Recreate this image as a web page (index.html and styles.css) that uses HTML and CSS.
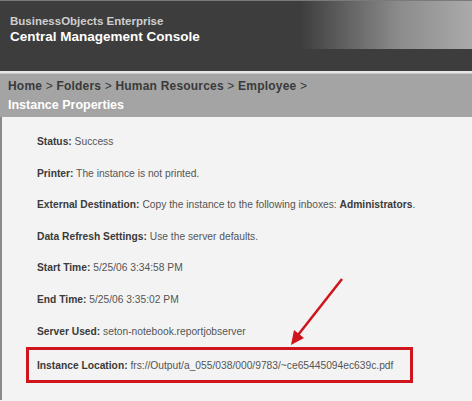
FILE: index.html
```html
<!DOCTYPE html>
<html lang="en">
<head>
  <meta charset="UTF-8" />
  <title>Central Management Console - Instance Properties</title>
  <link rel="stylesheet" href="styles.css">
</head>
<body>
  <div class="header">
    <div class="header-top">
      <div class="product">BusinessObjects Enterprise</div>
      <div class="console">Central Management Console</div>
    </div>
  </div>

  <div class="crumbs">
    <div class="path"><b>Home</b> &gt; <b>Folders</b> &gt; <b>Human Resources</b> &gt; <b>Employee</b> &gt;</div>
    <div class="title">Instance Properties</div>
  </div>

  <div class="content">
    <div class="prop"><b>Status:</b> Success</div>
    <div class="prop"><b>Printer:</b> The instance is not printed.</div>
    <div class="prop"><b>External Destination:</b> Copy the instance to the following inboxes: <b>Administrators</b>.</div>
    <div class="prop"><b>Data Refresh Settings:</b> Use the server defaults.</div>
    <div class="prop"><b>Start Time:</b> 5/25/06 3:34:58 PM</div>
    <div class="prop"><b>End Time:</b> 5/25/06 3:35:02 PM</div>
    <div class="prop"><b>Server Used:</b> seton-notebook.reportjobserver</div>
    <div class="prop highlight"><b>Instance Location:</b> frs://Output/a_055/038/000/9783/~ce65445094ec639c.pdf</div>

    <!-- callout arrow pointing at the highlighted row -->
    <svg class="arrow" width="70" height="80" viewBox="0 0 70 80">
      <line x1="60" y1="4" x2="16" y2="60" stroke="#d0141b" stroke-width="2.5" />
      <polygon points="9,70 12,55 22,63" fill="#d0141b" />
    </svg>
  </div>
</body>
</html>
```

FILE: styles.css
```css
body {
  margin: 0;
  font-family: "Liberation Sans", Arial, sans-serif;
  background: #f3f3f3;
}
.header {
  background: #3d3d3d;
  border-top: 1px solid #7a7a7a;
  height: 70px;
  border-bottom: 2px solid #e6e6e6;
}
.header-top {
  height: 48px;
  padding: 14px 0 0 10px;
  box-sizing: border-box;
  background: linear-gradient(to right, #3d3d3d 0, #3d3d3d 300px, #8c8c8c 400px, #aaaaaa 472px);
}
.product {
  color: #cfcfcf;
  font-weight: bold;
  font-size: 11.5px;
}
.console {
  color: #fff;
  font-weight: bold;
  font-size: 13.5px;
  margin-top: 2px;
}
.crumbs {
  background: #a4a4a4;
  border-top: 1px solid #c8c8c8;
  height: 44px;
  padding: 5px 0 0 8px;
  box-sizing: border-box;
}
.path {
  color: #3a3a3a;
  font-size: 12px;
  letter-spacing: 0.2px;
}
.title {
  color: #fff;
  font-weight: bold;
  font-size: 12.5px;
  margin-top: 5px;
}
.content {
  position: relative;
  border-left: 2px solid #8a8a8a;
  padding: 19px 0 0 35px;
  height: 264px;
}
.prop {
  font-size: 10.25px;
  color: #555;
  height: 31.6px;
}
.prop b {
  color: #3a3a3a;
}
.highlight {
  margin-left: -11px;
  margin-top: -10px;
  width: 387px;
  height: 36px;
  border: 3px solid #d0141b;
  padding: 10px 0 0 8px;
  box-sizing: border-box;
}
.arrow {
  position: absolute;
  left: 280px;
  top: 158px;
}
```
